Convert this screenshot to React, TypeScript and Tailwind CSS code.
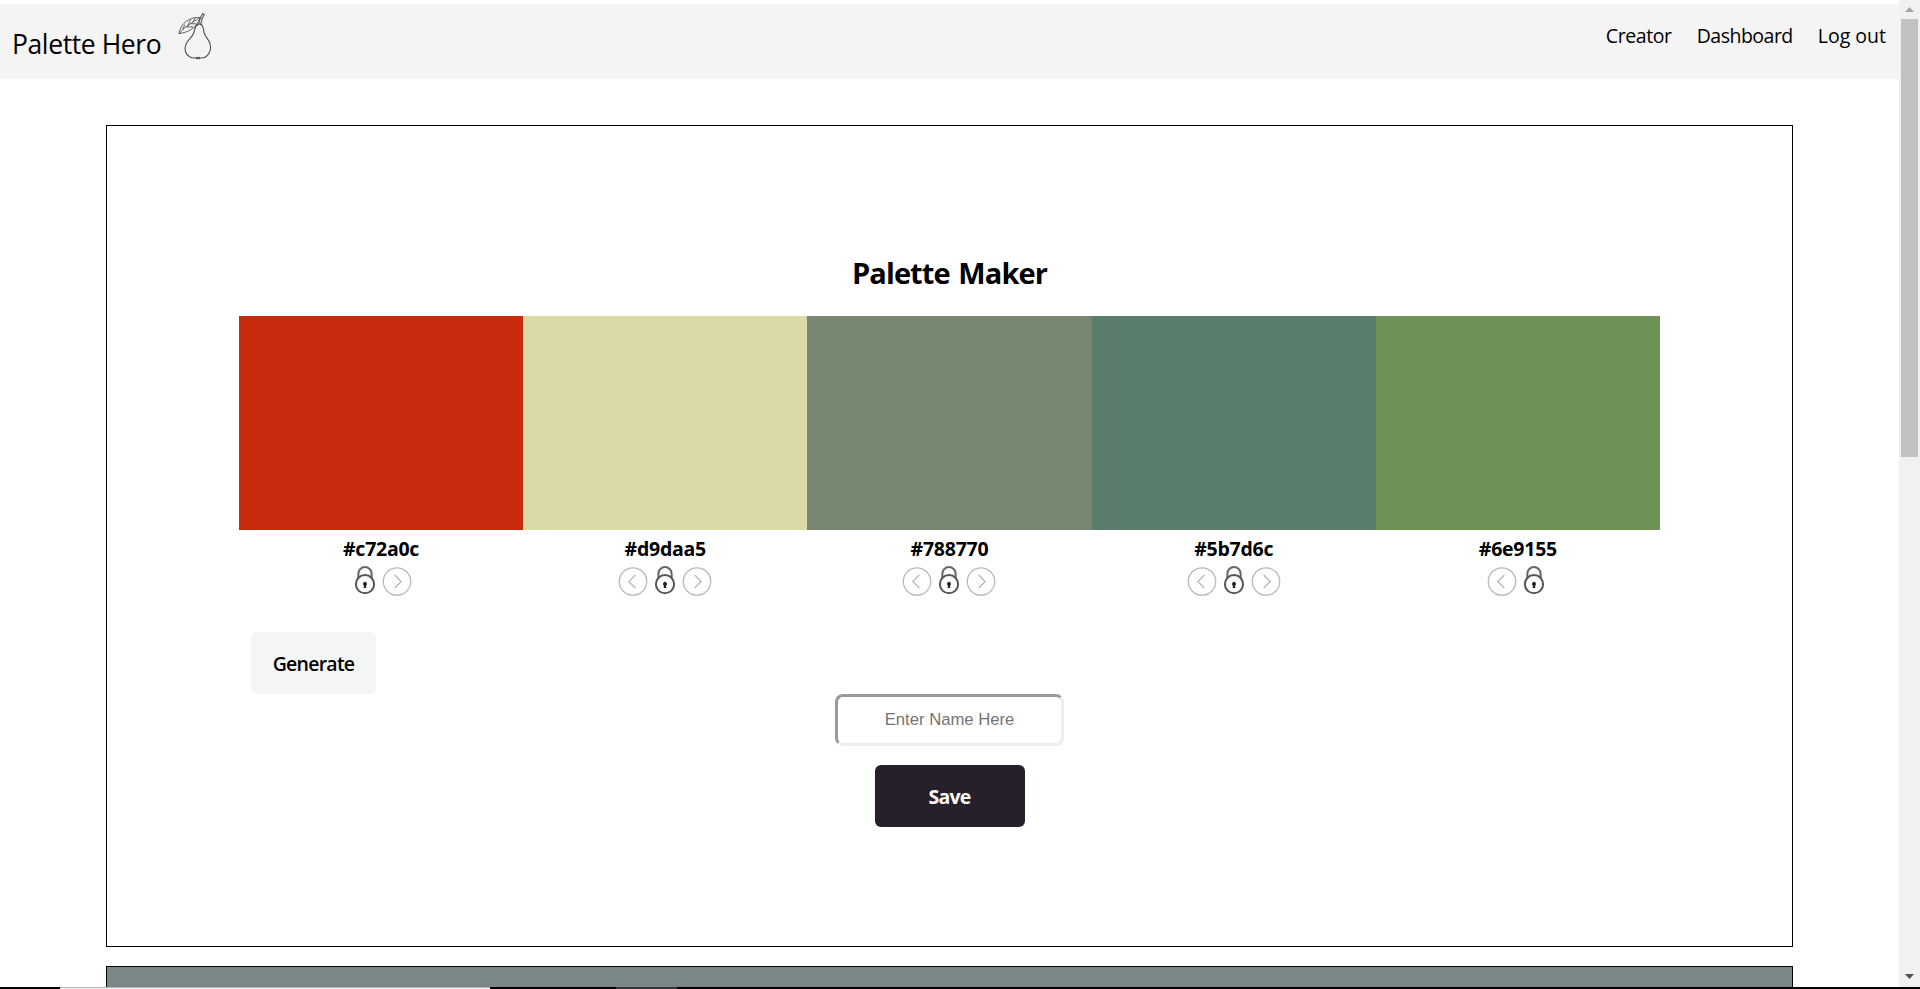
import React from "react";

const swatches = [
  { hex: "#c72a0c", bg: "bg-[#c72a0c]" },
  { hex: "#d9daa5", bg: "bg-[#d9daa5]" },
  { hex: "#788770", bg: "bg-[#788770]" },
  { hex: "#5b7d6c", bg: "bg-[#5b7d6c]" },
  { hex: "#6e9155", bg: "bg-[#6e9155]" },
];

function Pear() {
  return (
    <svg className="h-[48px] w-[36px]" viewBox="0 0 36 48" fill="none" stroke="#505050" strokeWidth="1.1" strokeLinecap="round" strokeLinejoin="round">
      <path d="M19.500 12.500c-2.800 1.800-2.800 5.500-3.800 8.500c-1.200 4-5.200 6-7.400 10.500C5.500 37.500 7.800 43 12 45c2.500 1.500 5.500.6 8 1.300c2.500-.7 5 .3 7.500-1.300c4.500-3 6.300-8.500 4.300-14c-1.500-4-4.800-6.500-5.800-10.500c-.7-3-.3-6.500-3-8" />
      <path d="M20.500 12c.8-4 2-7.500 4.200-10.500l1.500 1.200c-2 2.800-3 6-3.400 9.300M19 13.300l2-1.500l2.500 1.200" />
      <path d="M22.500 5.500C13 4.500 3 10 1 21.500c8-.8 16-4.500 20-13ZM1 21.500C6 15.500 13 11 22.500 5.500M5 17.500l1.500-4.500M9.500 14l3-6M8.500 15l6-.2M13 11.700l5 .1M15 10l2-4" strokeWidth=".9" />
      <path d="M18.500 45.300l3 1.500M21.500 45.300l-3 1.500" />
    </svg>
  );
}

function Lock() {
  return (
    <svg className="h-8 w-8" viewBox="0 0 32 32" fill="none">
      <path d="M9.400 14V9.600a6.600 6.600 0 0 1 13.200 0V14" stroke="#666666" strokeWidth="2" />
      <circle cx="16" cy="20.200" r="9.100" stroke="#555555" strokeWidth="2" />
      <path d="M16 17.700a2.300 2.300 0 0 1 1.100 4.100l.2 2.300h-2.600l.2-2.300a2.300 2.300 0 0 1 1.100-4.100Z" fill="#222222" />
    </svg>
  );
}

function Arrow({ left = false }: { left?: boolean }) {
  return (
    <svg className="h-8 w-8" viewBox="0 0 32 32" fill="none" stroke="#b9b9b9" strokeWidth="1.300">
      <circle cx="16" cy="17.500" r="13.700" />
      <path d={left ? "M18.300 11L11.800 17.500L18.300 24" : "M13.700 11L20.200 17.500L13.700 24"} />
    </svg>
  );
}

export default function App() {
  return (
    <div className="relative flex h-[989px] w-[1920px] overflow-hidden bg-white font-['Open_Sans',sans-serif] text-black">
      <div className="w-[1899px] pt-1">
        <nav className="flex h-[75px] items-start justify-between bg-[#f4f4f4] pr-[13px] pl-3">
          <div className="flex items-start">
            <span className="mt-[22px] w-[150px] text-[26.500px] leading-9 tracking-[-0.400px] whitespace-nowrap">Palette Hero</span>
            <span className="mt-2 ml-4"><Pear /></span>
          </div>
          <div className="mt-[18px] flex gap-[25px] text-[19.500px] leading-7">
            <a className="tracking-[-0.400px]">Creator</a>
            <a className="tracking-[-0.500px]">Dashboard</a>
            <a>Log out</a>
          </div>
        </nav>
        <main className="mt-[46px] ml-[106px] w-[1687px]">
          <section className="h-[822px] border border-black px-[132px] pt-[127px]">
            <h1 className="text-center text-[29px] leading-10 font-bold tracking-[-0.900px] [word-spacing:2px]">Palette Maker</h1>
            <div className="mt-[23px] grid grid-cols-5">
              {swatches.map((s, i) => (
                <div key={s.hex} className="flex flex-col items-center">
                  <div className={"h-[214px] w-full " + s.bg} />
                  <p className="mt-[5px] mb-px text-[19.500px] leading-7 font-bold tracking-[-0.250px]">{s.hex}</p>
                  <div className="flex">
                    {i > 0 && <Arrow left />}
                    <Lock />
                    {i < swatches.length - 1 && <Arrow />}
                  </div>
                </div>
              ))}
            </div>
            <button className="mt-9 ml-3 block h-[62px] w-[125px] rounded-md bg-[#f4f6f6] pt-[2px] text-[19.500px] font-semibold tracking-[-0.750px]">Generate</button>
            <div className="flex flex-col items-center">
              <input
                className="h-[52px] w-[229px] rounded-lg border-3 border-t-[#9a9a9a] border-r-[#eeeeee] border-b-[#eeeeee] border-l-[#9a9a9a] pb-px text-center font-['Liberation_Sans',sans-serif] text-[16.670px] placeholder:text-[#757575]"
                placeholder="Enter Name Here"
              />
              <button className="mt-[19px] h-[62px] w-[150px] rounded-md bg-[#281f2c] pt-[2px] text-[19.500px] font-bold tracking-[-0.750px] text-white">Save</button>
            </div>
          </section>
          <section className="mt-[19px] h-[100px] border border-black bg-[#7b8687]" />
        </main>
      </div>
      <div className="flex h-[987px] w-[21px] flex-col items-center bg-[#f1f1f1]">
        <svg className="h-[19px] w-[21px] shrink-0" viewBox="0 0 21 19"><path d="M6 12L10.500 7L15 12Z" fill="#a3a3a3" /></svg>
        <div className="h-[438px] w-[17px] bg-[#c1c1c1]" />
        <svg className="mt-auto h-[19px] w-[21px] shrink-0" viewBox="0 0 21 19"><path d="M6 6L10.500 11L15 6Z" fill="#505050" /></svg>
      </div>
      <div className="absolute bottom-0 left-0 flex h-[2px] w-full bg-black">
        <div className="ml-[60px] h-full w-[430px] border-t border-[#b5b5b5] bg-[#f3f3f3]" />
        <div className="ml-[126px] h-full w-[61px] bg-[#333333]" />
      </div>
    </div>
  );
}
